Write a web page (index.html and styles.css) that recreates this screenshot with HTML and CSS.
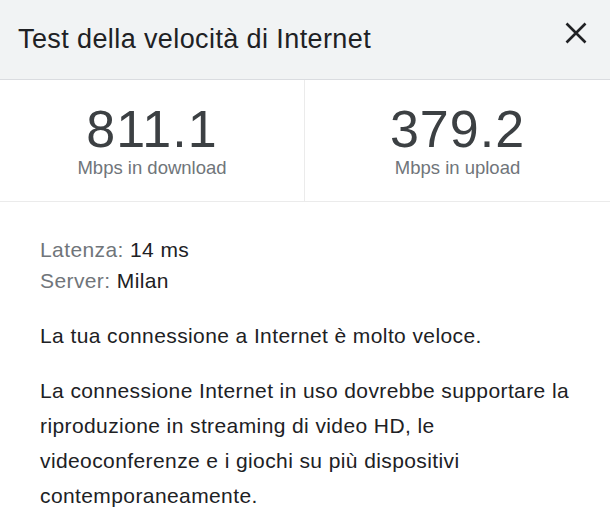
FILE: index.html
```html
<!DOCTYPE html>
<html lang="it">
<head>
<meta charset="utf-8">
<link rel="stylesheet" href="styles.css">
</head>
<body>
<div class="card">
  <header class="head">
    <h1 class="title">Test della velocità di Internet</h1>
    <svg class="close" viewBox="0 0 22 22" width="22" height="22" aria-label="Chiudi">
      <path d="M1.5 1.5 L20.5 20.5 M20.5 1.5 L1.5 20.5" stroke="#202124" stroke-width="2.6" fill="none"/>
    </svg>
  </header>
  <section class="stats">
    <div class="stat">
      <div class="num">811.1</div>
      <div class="label">Mbps in download</div>
    </div>
    <div class="stat">
      <div class="num">379.2</div>
      <div class="label">Mbps in upload</div>
    </div>
  </section>
  <section class="details">
    <div class="meta">
      <div><span class="key">Latenza:</span> 14 ms</div>
      <div><span class="key">Server:</span> Milan</div>
    </div>
    <p class="para first">La tua connessione a Internet è molto veloce.</p>
    <p class="para">La connessione Internet in uso dovrebbe supportare la riproduzione in streaming di video HD, le videoconferenze e i giochi su più dispositivi contemporaneamente.</p>
  </section>
</div>
</body>
</html>
```

FILE: styles.css
```css
html, body {
  margin: 0;
  padding: 0;
  background: #ffffff;
}
body {
  font-family: "Liberation Sans", Arial, sans-serif;
  color: #202124;
}
.card {
  width: 610px;
}
.head {
  height: 79px;
  background: #f1f3f4;
  border-bottom: 1px solid #dadce0;
  display: flex;
  align-items: center;
  justify-content: space-between;
  padding: 0 23px 0 18px;
  box-sizing: content-box;
}
.title {
  margin: 0;
  font-weight: normal;
  font-size: 27px;
  letter-spacing: 0.4px;
  color: #202124;
}
.close {
  width: 22px;
  height: 22px;
  margin-top: -14px;
}
.stats {
  display: grid;
  grid-template-columns: 305px 1fr;
  border-bottom: 1px solid #ebebeb;
}
.stat {
  display: flex;
  flex-direction: column;
  align-items: center;
  padding: 23px 0 22px;
}
.stat:first-child {
  border-right: 1px solid #ebebeb;
}
.num {
  font-size: 52px;
  line-height: 1;
  letter-spacing: 1px;
  color: #3c4043;
}
.label {
  margin-top: 2px;
  font-size: 18.5px;
  line-height: 22px;
  color: #70757a;
}
.details {
  padding: 32px 24px 0 40px;
  font-size: 21px;
  letter-spacing: 0.4px;
}
.meta {
  line-height: 31px;
}
.key {
  color: #70757a;
}
.para {
  margin: 20px 0 0;
  line-height: 35px;
}
.para.first {
  margin-top: 22px;
}
```
